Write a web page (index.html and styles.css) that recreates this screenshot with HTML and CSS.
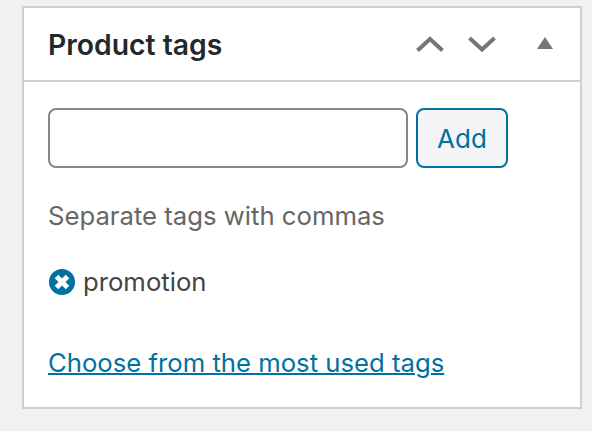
FILE: index.html
```html
<!DOCTYPE html>
<html lang="en">
<head>
    <meta charset="utf-8" />
    <title>Product tags</title>
    <link rel="stylesheet" href="styles.css">
</head>
<body>
    <div class="postbox">
        <div class="postbox-header">
            <h2>Product tags</h2>
            <div class="handle-actions">
                <svg class="chevron" width="30" height="18" viewBox="0 0 30 18"><path d="M2.500 15.500 15 4l12.500 11.500" fill="none" stroke="#72777c" stroke-width="4"/></svg>
                <svg class="chevron" width="30" height="18" viewBox="0 0 30 18"><path d="M2.500 3 15 14.500 27.500 3" fill="none" stroke="#72777c" stroke-width="4"/></svg>
                <svg class="toggle" width="16" height="12" viewBox="0 0 16 12"><path d="M8 0 16 12H0z" fill="#72777c"/></svg>
            </div>
        </div>
        <div class="inside">
            <div class="add-row">
                <input class="tag-input" type="text" />
                <button class="add-button">Add</button>
            </div>
            <p class="howto">Separate tags with commas</p>
            <div class="tag-item">
                <svg width="26" height="26" viewBox="0 0 26 26"><circle cx="13" cy="13" r="13" fill="#0071a1"/><path d="M7.500 7.500l11 11m0-11l-11 11" stroke="#fff" stroke-width="5"/></svg>
                <span>promotion</span>
            </div>
            <a class="most-used" href="#">Choose from the most used tags</a>
        </div>
    </div>
</body>
</html>
```

FILE: styles.css
```css
body {
    margin: 0;
    background-color: #f1f1f1;
    font-family: Inter, "Noto Sans", sans-serif;
}
.postbox {
    box-sizing: border-box;
    width: 560px;
    height: 403px;
    margin: 6px 0 0 22px;
    background-color: #fff;
    border: 2px solid #ccd0d4;
}
.postbox-header {
    display: flex;
    align-items: center;
    justify-content: space-between;
    box-sizing: border-box;
    height: 74px;
    padding: 0 27px 0 24px;
    border-bottom: 2px solid #ccd0d4;
}
.postbox-header h2 {
    margin: 2px 0 0;
    font-size: 28.3px;
    font-weight: 600;
    color: #23282d;
}
.handle-actions {
    display: flex;
    align-items: center;
}
.chevron {
    margin-right: 22px;
}
.chevron:first-child {
    margin-left: -2px;
}
.toggle {
    margin-left: 18px;
    margin-bottom: 2px;
}
.inside {
    padding: 26px 24px 0;
}
.add-row {
    display: flex;
    gap: 8px;
}
.tag-input {
    box-sizing: border-box;
    width: 360px;
    height: 60px;
    background-color: #fff;
    border: 2px solid #7e8993;
    border-radius: 8px;
}
.add-button {
    box-sizing: border-box;
    width: 92px;
    height: 60px;
    padding: 0;
    font-family: inherit;
    font-size: 26px;
    color: #0071a1;
    background-color: #f3f5f6;
    border: 2px solid #0071a1;
    border-radius: 8px;
}
.howto {
    margin: 32px 0 0;
    font-size: 25.7px;
    color: #666;
}
.tag-item {
    display: flex;
    align-items: center;
    gap: 8px;
    margin-top: 35px;
    margin-left: 1px;
    font-size: 25.7px;
    color: #444;
}
.most-used {
    display: block;
    margin-top: 50px;
    font-size: 25.7px;
    color: #0071a1;
    text-decoration-thickness: 2px;
}
```
